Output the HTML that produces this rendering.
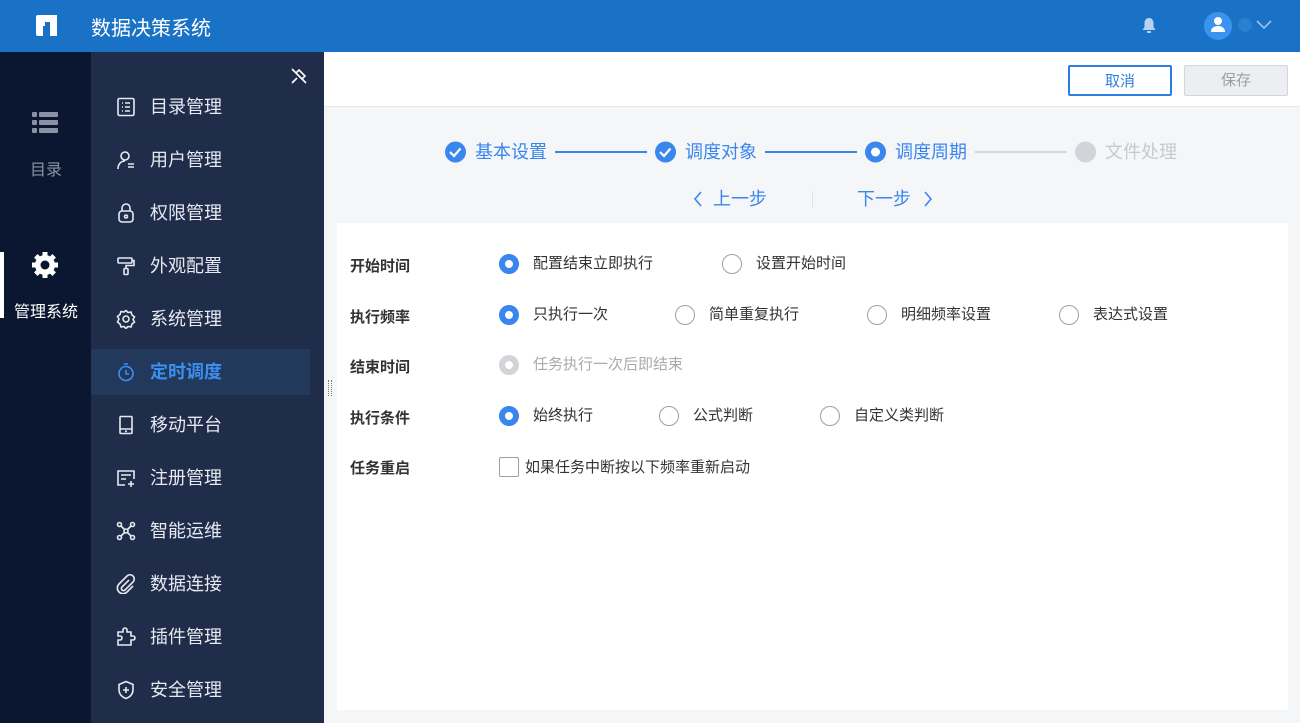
<!DOCTYPE html>
<html><head><meta charset="utf-8"><style>
*{margin:0;padding:0;box-sizing:border-box}
body{width:1300px;height:723px;overflow:hidden;font-family:"Liberation Sans","Noto Sans CJK SC",sans-serif;background:#f5f6f8;position:relative}
.abs{position:absolute}
.hdr{left:0;top:0;width:1300px;height:52px;background:#1a72c6}
.rail{left:0;top:52px;width:91px;height:671px;background:#0b1630}
.side{left:91px;top:52px;width:233px;height:671px;background:#1f2d4b}
.mi{position:absolute;left:0;width:219px;height:46px;color:#e6e9ef;font-size:18px;line-height:46px;padding-left:59px}
.mi svg{position:absolute;left:25px;top:13px}
.mi.act{background:#23395c;color:#3b8ff0;font-weight:bold}
.top{left:324px;top:52px;width:976px;height:55px;background:#fff;border-bottom:1px solid #e3e6eb}
.btn{position:absolute;top:13px;width:104px;height:31px;font-size:15px;text-align:center;line-height:29px;border-radius:2px}
.panel{left:337px;top:223px;width:951px;height:487px;background:#fff}
.lbl{position:absolute;left:13px;font-size:15px;font-weight:bold;color:#333}
.r{position:absolute;font-size:15px;color:#333;padding-left:34px;line-height:20px}
.r:before{content:"";position:absolute;left:0;top:0;width:20px;height:20px;border-radius:50%;border:1.5px solid #9aa0a8;box-sizing:border-box;background:#fff}
.r.on:before{border:6px solid #3a86ef}
.r.dis{color:#aaa}.r.dis:before{border:6px solid #d2d4d8}
.step{position:absolute;top:141px;font-size:18px;color:#3a86ef;line-height:22px}
</style></head><body>
<div class="abs hdr">
 <svg class="abs" style="left:33px;top:13px" width="26" height="25" viewBox="0 0 26 25"><path d="M5 2h19v21h-7V9h-5v4H10v10H5a2 2 0 01-2-2V4a2 2 0 012-2z" fill="#fff"/></svg>
 <div class="abs" style="left:91px;top:12px;color:#fff;font-size:20px">数据决策系统</div>
 <svg class="abs" style="left:1142px;top:17px" width="14" height="17" viewBox="0 0 14 17"><path d="M7 1c3 0 4.5 2.5 4.5 5v4l2 3H.5l2-3V6C2.5 3.5 4 1 7 1z" fill="#b7d2f0"/><rect x="5" y="14" width="4" height="2" fill="#b7d2f0"/></svg>
 <div class="abs" style="left:1204px;top:12px;width:28px;height:28px;border-radius:50%;background:#3b93f0"></div>
 <svg class="abs" style="left:1210px;top:16px" width="16" height="18" viewBox="0 0 16 18"><circle cx="8" cy="5" r="4" fill="#fff"/><path d="M1 16c0-4 3-6 7-6s7 2 7 6z" fill="#fff"/></svg>
 <div class="abs" style="left:1238px;top:18px;width:14px;height:14px;border-radius:50%;background:#2a7fd0"></div>
 <svg class="abs" style="left:1256px;top:20px" width="16" height="10" viewBox="0 0 16 10"><path d="M1 1l7 7 7-7" stroke="#9ec3eb" stroke-width="1.6" fill="none"/></svg>
</div>
<div class="abs rail">
 <svg class="abs" style="left:32px;top:60px" width="26" height="22" viewBox="0 0 26 22"><g fill="#8a93a3"><rect x="0" y="0" width="5" height="5" rx="1"/><rect x="7" y="0" width="19" height="5" rx="1"/><rect x="0" y="8" width="5" height="5" rx="1"/><rect x="7" y="8" width="19" height="5" rx="1"/><rect x="0" y="16" width="5" height="5" rx="1"/><rect x="7" y="16" width="19" height="5" rx="1"/></g></svg>
 <div class="abs" style="left:30px;top:104px;color:#8a93a3;font-size:16px">目录</div>
 <div class="abs" style="left:0;top:200px;width:4px;height:66px;background:#fff"></div>
 <svg class="abs" style="left:31px;top:199px" width="28" height="28" viewBox="0 0 28 28"><g fill="#fff"><circle cx="14" cy="14" r="10"/><g stroke="#fff" stroke-width="5"><path d="M14 1v26M1 14h26M4.8 4.8l18.4 18.4M23.2 4.8L4.8 23.2"/></g></g><circle cx="14" cy="14" r="4.5" fill="#0b1630"/></svg>
 <div class="abs" style="left:14px;top:246px;color:#fff;font-size:16px">管理系统</div>
</div>
<div class="abs side">
 <svg class="abs" style="left:199px;top:15px" width="18" height="18" viewBox="0 0 18 18"><g stroke="#fff" stroke-width="1.6" fill="none"><path d="M2 16l5-5M6 6l6 6M9 3l6 6-3 3-6-6zM2 2l14 14"/></g></svg>
 <div class="mi" style="top:32px"><svg width="20" height="20" viewBox="0 0 20 20" fill="none" stroke="#e6e9ef" stroke-width="1.6"><rect x="2" y="1.5" width="16" height="17" rx="1.5"/><path d="M6 6h1M9 6h5M6 10h1M9 10h5M6 14h1M9 14h5"/></svg>目录管理</div>
 <div class="mi" style="top:85px"><svg width="20" height="20" viewBox="0 0 20 20" fill="none" stroke="#e6e9ef" stroke-width="1.6"><circle cx="9" cy="6" r="4"/><path d="M2 19c0-5 3-8 7-8M12 14h6M12 17h6"/></svg>用户管理</div>
 <div class="mi" style="top:138px"><svg width="20" height="20" viewBox="0 0 20 20" fill="none" stroke="#e6e9ef" stroke-width="1.6"><path d="M6 8V5a4 4 0 018 0v3"/><rect x="3" y="8" width="14" height="11" rx="3"/><circle cx="10" cy="13.5" r="1.5"/></svg>权限管理</div>
 <div class="mi" style="top:191px"><svg width="20" height="20" viewBox="0 0 20 20" fill="none" stroke="#e6e9ef" stroke-width="1.6"><rect x="2" y="2" width="14" height="5" rx="1"/><path d="M16 4.5h2v5h-8v3"/><rect x="8" y="12.5" width="4" height="6" rx="1"/></svg>外观配置</div>
 <div class="mi" style="top:244px"><svg width="20" height="20" viewBox="0 0 20 20" fill="none" stroke="#e6e9ef" stroke-width="1.6"><path d="M10 1.5l2 2 3-.5 1 3 2.5 2-1.5 2.5 1.5 2.5-2.5 2-1 3-3-.5-2 2-2-2-3 .5-1-3-2.5-2L3 10 1.5 7.5 4 5.5l1-3 3 .5z"/><circle cx="10" cy="10" r="3"/></svg>系统管理</div>
 <div class="mi act" style="top:297px"><svg width="20" height="20" viewBox="0 0 20 20" fill="none" stroke="#3b8ff0" stroke-width="1.6"><circle cx="10" cy="11.5" r="7"/><path d="M8 2h4M10 8v4h3"/></svg>定时调度</div>
 <div class="mi" style="top:350px"><svg width="20" height="20" viewBox="0 0 20 20" fill="none" stroke="#e6e9ef" stroke-width="1.6"><rect x="4" y="1.5" width="12" height="17" rx="1"/><path d="M4 14h12M9 16.3h2"/></svg>移动平台</div>
 <div class="mi" style="top:403px"><svg width="20" height="20" viewBox="0 0 20 20" fill="none" stroke="#e6e9ef" stroke-width="1.6"><path d="M9 17H2V3h16v8M5 7h10M5 11h5M15 13v6M12 16h6"/></svg>注册管理</div>
 <div class="mi" style="top:456px"><svg width="20" height="20" viewBox="0 0 20 20" fill="none" stroke="#e6e9ef" stroke-width="1.6"><circle cx="3.5" cy="3.5" r="2"/><circle cx="16.5" cy="3.5" r="2"/><circle cx="3.5" cy="16.5" r="2"/><circle cx="16.5" cy="16.5" r="2"/><circle cx="10" cy="10" r="2"/><path d="M5 5l3.5 3.5M15 5l-3.5 3.5M5 15l3.5-3.5M15 15l-3.5-3.5"/></svg>智能运维</div>
 <div class="mi" style="top:509px"><svg width="20" height="20" viewBox="0 0 20 20" fill="none" stroke="#e6e9ef" stroke-width="1.6"><path d="M13 6l-7 7a2 2 0 003 3l8-8a4 4 0 00-6-6L3 10a5.5 5.5 0 008 8l6-6"/></svg>数据连接</div>
 <div class="mi" style="top:562px"><svg width="20" height="20" viewBox="0 0 20 20" fill="none" stroke="#e6e9ef" stroke-width="1.6"><path d="M2 18v-5h2a2 2 0 000-4H2V5h5V3a2 2 0 014 0v2h4v4h2a2 2 0 010 4h-2v5z"/></svg>插件管理</div>
 <div class="mi" style="top:615px"><svg width="20" height="20" viewBox="0 0 20 20" fill="none" stroke="#e6e9ef" stroke-width="1.6"><path d="M10 1.5l7 3v5c0 4.5-3 7.5-7 9-4-1.5-7-4.5-7-9v-5z"/><path d="M10 7v6M7 10h6"/></svg>安全管理</div>
</div>
<div class="abs" style="left:328px;top:380px;width:4px;height:16px;border-left:1px dotted #777;border-right:1px dotted #777"></div>
<div class="abs top">
 <div class="btn" style="left:744px;border:2px solid #2f7fe0;color:#2f7fe0;background:#fff">取消</div>
 <div class="btn" style="left:860px;border:1px solid #d3d6db;color:#9aa0a8;background:#eceef1">保存</div>
</div>
<svg class="abs" style="left:0;top:0" width="1300" height="220">
 <g fill="#3a86ef"><circle cx="455.5" cy="152" r="10.5"/><circle cx="665.5" cy="152" r="10.5"/><circle cx="875.5" cy="152" r="10.5"/></g>
 <circle cx="875.5" cy="152" r="4.5" fill="#fff"/>
 <circle cx="1085.5" cy="152" r="10.5" fill="#d2d4d9"/>
 <path d="M450 152l4 4 6.5-7.5M660 152l4 4 6.5-7.5" stroke="#fff" stroke-width="2.2" fill="none"/>
 <rect x="555" y="151" width="92" height="2" fill="#3a86ef"/><rect x="765" y="151" width="92" height="2" fill="#3a86ef"/><rect x="975" y="151" width="92" height="2" fill="#d4d6da"/>
 <path d="M701 192l-6 7 6 7M925 192l6 7-6 7" stroke="#3a86ef" stroke-width="1.6" fill="none"/>
 <rect x="812" y="191" width="1" height="16" fill="#e0e2e6"/>
</svg>
<div class="step" style="left:475px">基本设置</div>
<div class="step" style="left:685px">调度对象</div>
<div class="step" style="left:895px">调度周期</div>
<div class="step" style="left:1105px;color:#c6c9ce">文件处理</div>
<div class="step" style="left:713px;top:188px">上一步</div>
<div class="step" style="left:857px;top:188px">下一步</div>
<div class="abs panel">
 <div class="lbl" style="top:32px">开始时间</div>
 <div class="r on" style="left:162px;top:31px">配置结束立即执行</div>
 <div class="r" style="left:385px;top:31px">设置开始时间</div>
 <div class="lbl" style="top:83px">执行频率</div>
 <div class="r on" style="left:162px;top:82px">只执行一次</div>
 <div class="r" style="left:338px;top:82px">简单重复执行</div>
 <div class="r" style="left:530px;top:82px">明细频率设置</div>
 <div class="r" style="left:722px;top:82px">表达式设置</div>
 <div class="lbl" style="top:133px">结束时间</div>
 <div class="r dis" style="left:162px;top:132px">任务执行一次后即结束</div>
 <div class="lbl" style="top:184px">执行条件</div>
 <div class="r on" style="left:162px;top:183px">始终执行</div>
 <div class="r" style="left:322px;top:183px">公式判断</div>
 <div class="r" style="left:483px;top:183px">自定义类判断</div>
 <div class="lbl" style="top:234px">任务重启</div>
 <div class="abs" style="left:162px;top:234px;width:20px;height:20px;border:1.5px solid #9aa0a8;border-radius:2px"></div>
 <div class="abs" style="left:188px;top:233px;font-size:15px;color:#333">如果任务中断按以下频率重新启动</div>
</div>
</body></html>
